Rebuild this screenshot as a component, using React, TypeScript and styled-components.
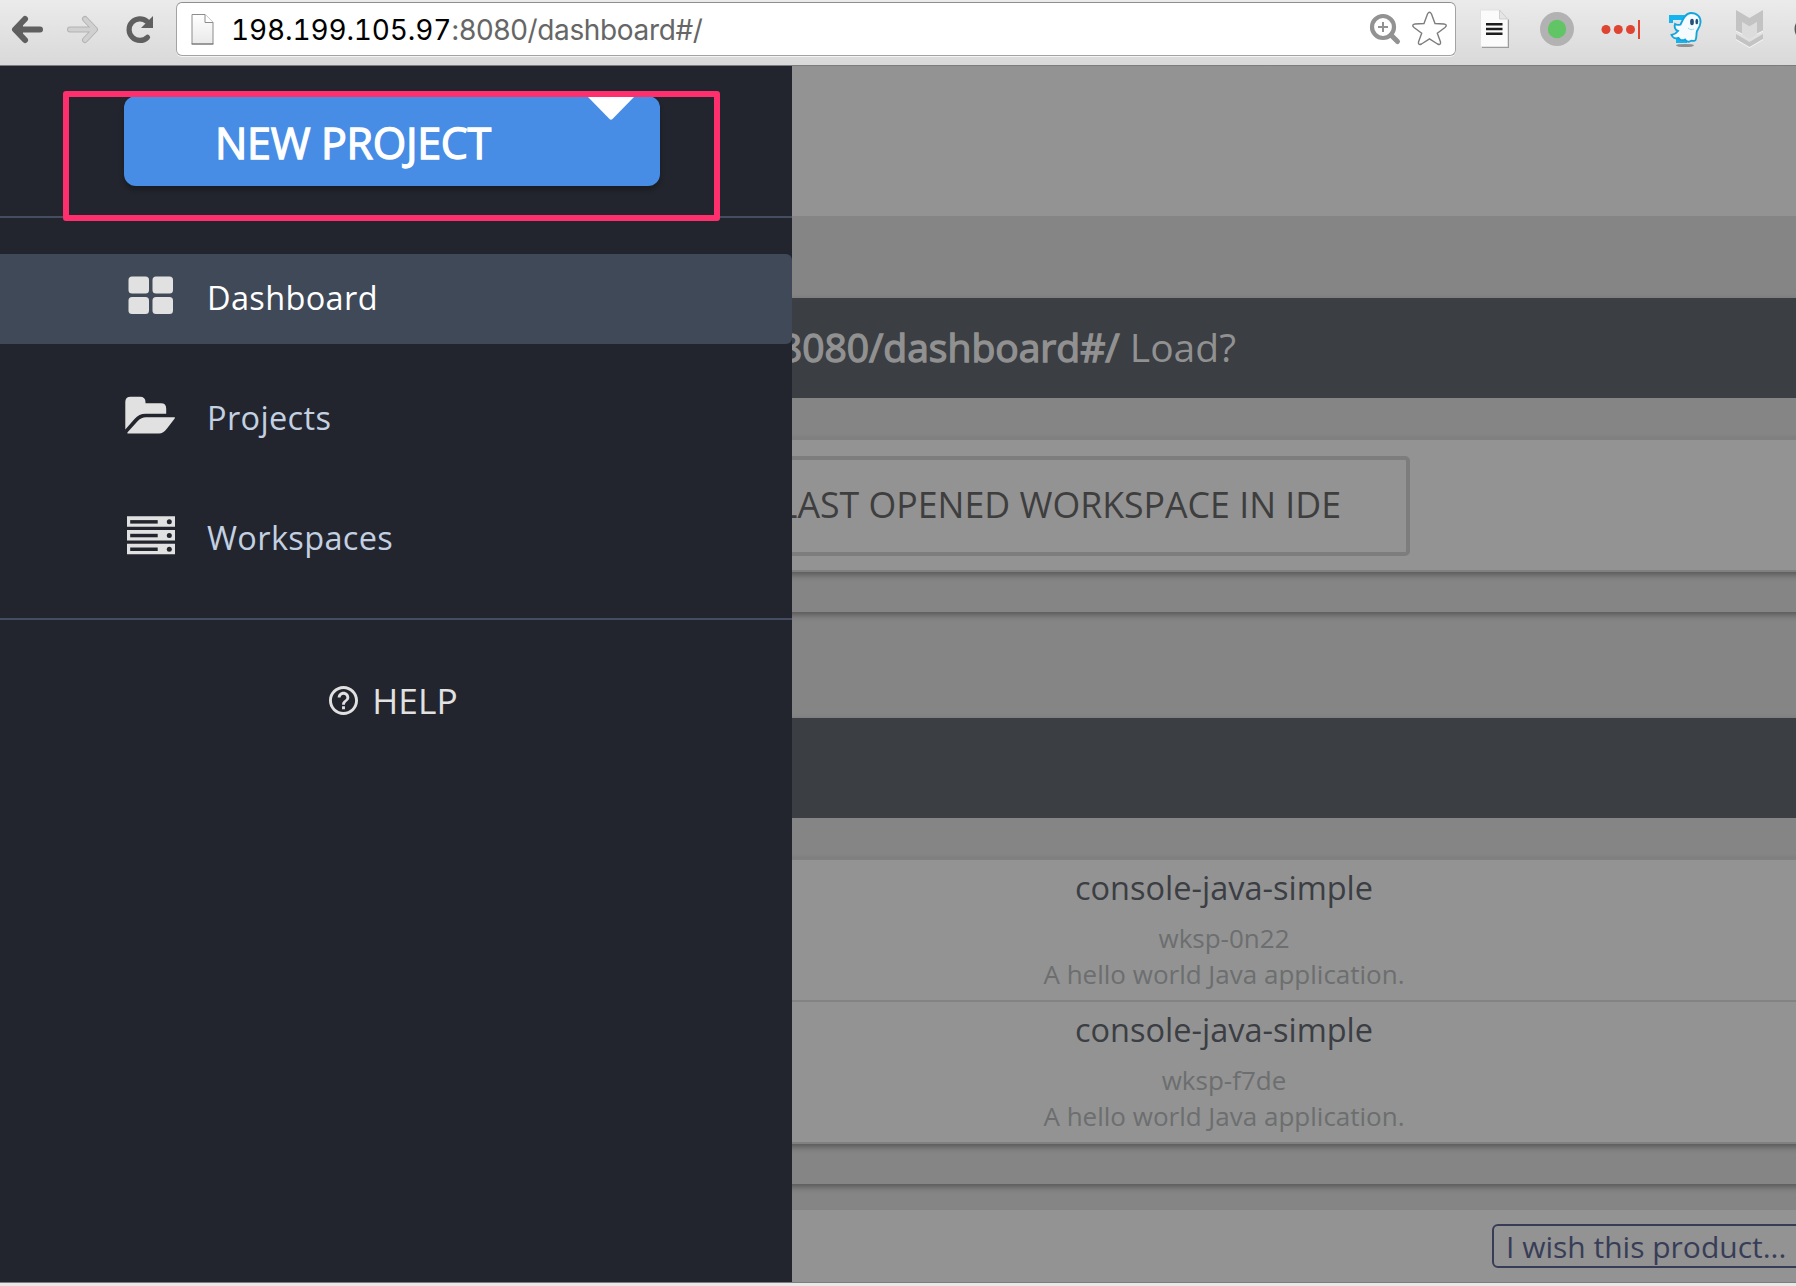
import React from 'react';
import styled, { createGlobalStyle } from 'styled-components';

const GlobalStyle = createGlobalStyle`
  * { box-sizing: border-box; }
  body { margin: 0; background: #e8e8e8; overflow: hidden; }
`;

const sans = '"Open Sans", "Noto Sans", sans-serif';

const Window = styled.div`
  width: 1796px;
  height: 1286px;
  display: flex;
  flex-direction: column;
  background: #e8e8e8;
  font-family: ${sans};
  overflow: hidden;
`;

/* ---------- browser toolbar ---------- */

const Toolbar = styled.header`
  flex: none;
  height: 66px;
  display: flex;
  align-items: flex-start;
  background: linear-gradient(#ebebeb, #d9d9d9);
  border-bottom: 1px solid #7c7c7c;
  overflow: hidden;
`;

const NavButtons = styled.div`
  flex: none;
  width: 176px;
  height: 60px;
`;

const AddressBar = styled.div`
  flex: none;
  width: 1280px;
  height: 54px;
  margin-top: 2px;
  padding: 0 5px 0 14px;
  display: flex;
  align-items: center;
  background: #fff;
  border: 1px solid #a3a3a3;
  border-top-color: #8f8f8f;
  border-radius: 6px;
  box-shadow: 0 1px 0 rgba(255, 255, 255, 0.7);
`;

const Url = styled.div`
  flex: 1;
  margin-left: 16px;
  padding-top: 1px;
  font: 400 28px/50px Inter, "Liberation Sans", sans-serif;
  letter-spacing: -0.35px;
  color: #666;
`;

const Host = styled.span`
  font-variant-numeric: tabular-nums;
  letter-spacing: -0.15px;
  color: #000;
`;

const Extensions = styled.div`
  flex: 1;
  height: 60px;
`;

/* ---------- page ---------- */

const Page = styled.div`
  flex: none;
  height: 1217px;
  display: flex;
  border-bottom: 1px solid #7d7d7d;
`;

const Sidebar = styled.aside`
  flex: none;
  position: relative;
  width: 792px;
  display: flex;
  flex-direction: column;
  background: #22252d;
`;

const SidebarHead = styled.div`
  padding: 30px 132px 30px 124px;
  border-bottom: 2px solid #454d61;
`;

const NewProject = styled.button`
  width: 536px;
  height: 90px;
  padding: 2px 26px 0 91px;
  display: flex;
  justify-content: space-between;
  border: 0;
  border-radius: 12px;
  background: #478de6;
  box-shadow: 0 4px 5px rgba(0, 0, 0, 0.26);
  color: #fff;
  font: 400 43px/90px ${sans};
  letter-spacing: -0.3px;
  -webkit-text-stroke: 1.3px #fff;
`;

const Caret = styled.svg`
  display: block;
  margin-top: -2px;
`;

const Highlight = styled.div`
  position: absolute;
  left: 63px;
  top: 25px;
  width: 657px;
  height: 130px;
  border: 6px solid #ff2f6d;
  border-radius: 3px;
`;

const Nav = styled.nav`
  padding: 36px 0 34px;
  display: flex;
  flex-direction: column;
  gap: 30px;
  border-bottom: 2px solid #454d61;
`;

const NavItem = styled.a<{ $active?: boolean }>`
  height: 90px;
  padding-left: 124px;
  display: flex;
  gap: 31px;
  border-radius: 0 6px 6px 0;
  background: ${(p) => (p.$active ? '#404957' : 'transparent')};
  color: ${(p) => (p.$active ? '#fff' : '#c3d0e2')};
  font-size: 32.5px;
  line-height: 88px;
  letter-spacing: 0.35px;
`;

const Help = styled.div`
  margin-top: 56px;
  padding-right: 5px;
  display: flex;
  align-items: center;
  justify-content: center;
  gap: 14px;
  color: #e1e1e1;
  font-size: 35.3px;
  line-height: 49px;
`;

const Main = styled.main`
  flex: 1;
  min-width: 0;
  display: flex;
  flex-direction: column;
  background: #858585;
  overflow: hidden;
`;

const PageHeader = styled.div`
  flex: none;
  height: 150px;
  margin-bottom: 82px;
  background: #939393;
`;

/* Sections bleed 20px past both edges so their shadows run the full width. */
const Section = styled.section<{ $after: number }>`
  flex: none;
  padding-bottom: 40px;
  margin: 0 -20px ${(p) => p.$after}px;
  background: #858585;
  box-shadow: 0 3px 6px rgba(0, 0, 0, 0.34);
`;

const Banner = styled.div`
  height: 100px;
  margin-bottom: 40px;
  padding: 0 580px 4px 0;
  display: flex;
  align-items: center;
  justify-content: flex-end;
  overflow: hidden;
  white-space: pre;
  background: #3b3e43;
  color: #919191;
  font-size: 39px;
`;

const Strong = styled.span`
  -webkit-text-stroke: 1.4px #919191;
`;

const Card = styled.div`
  border: solid #808080;
  border-width: 2px 0;
  background: #939393;
  box-shadow: 0 3px 6px rgba(0, 0, 0, 0.34);
`;

const CardActions = styled.div`
  height: 130px;
  padding: 2px 406px 0 0;
  display: flex;
  align-items: center;
  justify-content: flex-end;
  overflow: hidden;
`;

const OpenButton = styled.button`
  flex: none;
  height: 100px;
  padding: 0 65px 5px 90px;
  border: 4px solid #7d7d7d;
  border-radius: 5px;
  background: transparent;
  color: #3e3e3e;
  font: 400 35.7px ${sans};
  white-space: nowrap;
`;

const Project = styled.article`
  height: 140px;
  padding: 6px 160px 0 20px;
  text-align: center;
  & + & { height: 142px; border-top: 2px solid #838383; }
`;

const ProjectName = styled.div`
  font-size: 32.5px;
  line-height: 44px;
  color: #3b3e43;
`;

const ProjectMeta = styled.div<{ $top?: number }>`
  margin-top: ${(p) => p.$top ?? 0}px;
  font-size: 26px;
  line-height: 36px;
  color: #6c6e6f;
`;

const Footer = styled.footer`
  flex: 1;
  padding: 14px 0 0 700px;
  background: #939393;
`;

const WishInput = styled.div`
  width: 340px;
  height: 44px;
  padding-left: 12px;
  border: 2px solid #383d57;
  border-radius: 6px;
  color: #383d57;
  font-size: 30px;
  line-height: 41px;
  white-space: nowrap;
`;

const NavigationIcons = () => (
  <svg width="176" height="60" fill="none" strokeLinecap="round" strokeLinejoin="round">
    <g stroke="#5f5f5f" strokeWidth="6">
      <path d="M25 19 15 29.5 25 40M17 29.5h23" />
      <path d="M16 29.5 22 24v11z" strokeWidth="2" fill="#5f5f5f" />
    </g>
    <g stroke="#b3b3b3" strokeWidth="6"><path d="m85 19 10 10.500-10 10.500M93 29.500H70" /></g>
    <g stroke="#d0d0d0" strokeWidth="4"><path d="m85 19 10 10.500-10 10.500M93 29.500H70" /></g>
    <path d="M147 21.500a10.800 10.800 0 1 0 0.500 15.800" stroke="#5f5f5f" strokeWidth="5.200" />
    <path d="M153 16v12h-12z" fill="#5f5f5f" />
  </svg>
);

const PageIcon = () => (
  <svg width="24" height="34" viewBox="0 0 24 34">
    <defs>
      <linearGradient id="sheet" x2="0" y2="1"><stop stopColor="#fff" /><stop offset="1" stopColor="#e9e9e9" /></linearGradient>
    </defs>
    <path d="M1 2.500h13l8 8V32H1z" fill="url(#sheet)" stroke="#8c8c8c" />
    <path d="M14 2.500v8h8" fill="#fff" stroke="#8c8c8c" />
    <path d="M.5 32h22" stroke="#737373" />
  </svg>
);

const BarIcons = () => (
  <svg width="86" height="52" viewBox="1364 3 86 52" fill="none">
    <circle cx="1383" cy="27" r="11" stroke="#929292" strokeWidth="4.200" />
    <path d="M1378 27h10M1383 22v10" stroke="#929292" strokeWidth="2" />
    <path d="m1391 35 6.500 6.500" stroke="#929292" strokeWidth="5" strokeLinecap="round" />
    <path d="M1427.500 14Q1429.500 10.500 1431.500 14L1435 23.500 1444 24Q1448 24.800 1445 27.500L1437.300 33.300 1440.500 42Q1441 45.500 1437.500 44L1429.500 38.800 1421.500 44Q1418 45.500 1418.500 42L1421.700 33.300 1414 27.500Q1411 24.800 1415 24L1424 23.500Z" stroke="#7d7d7d" strokeWidth="1.400" />
  </svg>
);

const ExtensionIcons = () => (
  <svg width="340" height="60" viewBox="1456 0 340 60" fill="none">
    <path d="M1482 12h19l8 8v28h-27z" fill="#9c9c9c" />
    <path d="M1480.500 10h19l8 8v28.500h-27z" fill="#fbfbfb" stroke="#e2e2e2" />
    <path d="M1499.500 10v9h8z" fill="#e6e6e6" stroke="#cfcfcf" />
    <path d="M1486 24.200h16.500M1486 29h16.500M1486 33.800h16.500" stroke="#1d1d1d" strokeWidth="2.400" />
    <circle cx="1557" cy="29" r="17" fill="#b2b2b2" />
    <circle cx="1557" cy="29" r="9.200" fill="#61c566" />
    <g fill="#df4433">
      <circle cx="1606" cy="29.500" r="4.500" /><circle cx="1618.300" cy="29.500" r="4.500" /><circle cx="1630.500" cy="29.500" r="4.500" />
      <path d="M1638 20h2v19h-2z" />
    </g>
    <ellipse cx="1685" cy="45.500" rx="9" ry="1.600" fill="#8f8f8f" />
    <path d="M1669 15h16v5h-12v3h-4zM1676 38h11v5h-11z" fill="#14b5ee" />
    <path d="M1691 13c6 0 10 4 9.500 9.500-.3 4-2 6-3.500 8.500-1 3 0 6-1.500 9-1.500 2-3 0-5 1-2.500 1.500-4.500 0-5.500-1.500-2.500 1.500-5.500.5-6.500-1.500-3 1-6-.5-7-3 3-.5 5-2 6.500-4-3-1-4-4.500-3-7 2 1.500 3.500 1 5.500.5 3-6.500 5.500-11.500 10.500-11.500z" fill="#f5fbff" stroke="#14a5dc" strokeWidth="1.900" />
    <ellipse cx="1692" cy="22" rx="1.900" ry="3.200" fill="#264f7c" /><ellipse cx="1696.800" cy="21.500" rx="1.400" ry="2.800" fill="#264f7c" />
    <path d="M1688 28c2 2 4 2 6 1" stroke="#9edcf3" />
    <g transform="translate(0 1)" fill="#f6f6f6">
      <path d="m1736 10 13.500 8 13.500-8v20.500l-6 3V22l-7.500 4.500L1742 22v11.500l-6-3z" /><path d="m1736 34 13.500 8 13.500-8v5l-13.500 8-13.500-8z" />
    </g>
    <path d="M1742 22l7.500 4.500 7.500-4.500v12l-7.500 5-7.500-5z" fill="#dcdcdc" />
    <g fill="#c3c3c3">
      <path d="m1736 10 13.500 8 13.500-8v20.500l-6 3V22l-7.500 4.500L1742 22v11.500l-6-3z" /><path d="m1736 34 13.500 8 13.500-8v5l-13.500 8-13.500-8z" />
    </g>
    <circle cx="1807" cy="29" r="12.500" fill="#555" />
  </svg>
);

const DashboardIcon = () => (
  <svg width="52" height="90" fill="#e1e1e1">
    <rect x="4.500" y="22.500" width="20.500" height="17" rx="3.500" /><rect x="28.500" y="22.500" width="20.500" height="17" rx="3.500" />
    <rect x="4.500" y="43" width="20.500" height="17" rx="3.500" /><rect x="28.500" y="43" width="20.500" height="17" rx="3.500" />
  </svg>
);

const FolderIcon = () => (
  <svg width="52" height="90" fill="#e1e1e1">
    <path d="M1.300 55.500V28q0-5.300 5.300-5.300H16q5.500 0 5.500 5.500v1.100H37q5.200 0 5.200 5.200v5.200H21.500Q15 39.700 10.500 45z" />
    <path d="M22 43.200h28q1.700 0 .7 1.300L43 54.500q-3.700 5-8 5H4.500q-2 0-.7-1.600L14 46.800q3.300-3.600 8-3.600z" />
  </svg>
);

const ServersIcon = () => (
  <svg width="52" height="90">
    {[22.3, 36, 49.7].map((y) => (
      <g key={y}>
        <path d={`M3 ${y}h48v10.500H3z`} fill="#e1e1e1" />
        <path d={`M6.200 ${y + 3.800}h27.500v3.500H6.200z`} fill="#22252d" />
        <circle cx="45.300" cy={y + 5.500} r="2.500" fill="#22252d" />
      </g>
    ))}
  </svg>
);

const HelpIcon = () => (
  <svg width="29" height="29" viewBox="2 2 20 20" fill="currentColor">
    <path d="M11 18h2v-2h-2v2zm1-16C6.480 2 2 6.480 2 12s4.480 10 10 10 10-4.480 10-10S17.520 2 12 2zm0 18c-4.410 0-8-3.590-8-8s3.590-8 8-8 8 3.590 8 8-3.590 8-8 8zm0-14c-2.210 0-4 1.790-4 4h2c0-1.100.9-2 2-2s2 .9 2 2c0 2-3 1.750-3 5h2c0-2.250 3-2.500 3-5 0-2.210-1.790-4-4-4z" />
  </svg>
);

const projects = [
  { name: 'console-java-simple', workspace: 'wksp-0n22', description: 'A hello world Java application.' },
  { name: 'console-java-simple', workspace: 'wksp-f7de', description: 'A hello world Java application.' },
];

export default function App() {
  return (
    <Window>
      <GlobalStyle />
      <Toolbar>
        <NavButtons><NavigationIcons /></NavButtons>
        <AddressBar>
          <PageIcon />
          <Url><Host>198.199.105.97</Host>:8080/dashboard#/</Url>
          <BarIcons />
        </AddressBar>
        <Extensions><ExtensionIcons /></Extensions>
      </Toolbar>
      <Page>
        <Sidebar>
          <SidebarHead>
            <NewProject>
              NEW PROJECT
              <Caret width="46" height="24" fill="#fff"><path d="M0 0h46v1L24.500 23q-1.500 1.500-3 0L0 1z" /></Caret>
            </NewProject>
          </SidebarHead>
          <Nav>
            <NavItem $active><DashboardIcon />Dashboard</NavItem>
            <NavItem><FolderIcon />Projects</NavItem>
            <NavItem><ServersIcon />Workspaces</NavItem>
          </Nav>
          <Help><HelpIcon />HELP</Help>
          <Highlight />
        </Sidebar>
        <Main>
          <PageHeader />
          <Section $after={106}>
            <Banner><Strong>8080/dashboard#/</Strong> Load?</Banner>
            <Card>
              <CardActions><OpenButton>LAST OPENED WORKSPACE IN IDE</OpenButton></CardActions>
            </Card>
          </Section>
          <Section $after={26}>
            <Banner />
            <Card>
              {projects.map((p) => (
                <Project key={p.workspace}>
                  <ProjectName>{p.name}</ProjectName>
                  <ProjectMeta $top={10}>{p.workspace}</ProjectMeta>
                  <ProjectMeta>{p.description}</ProjectMeta>
                </Project>
              ))}
            </Card>
          </Section>
          <Footer><WishInput>I wish this product...</WishInput></Footer>
        </Main>
      </Page>
    </Window>
  );
}
